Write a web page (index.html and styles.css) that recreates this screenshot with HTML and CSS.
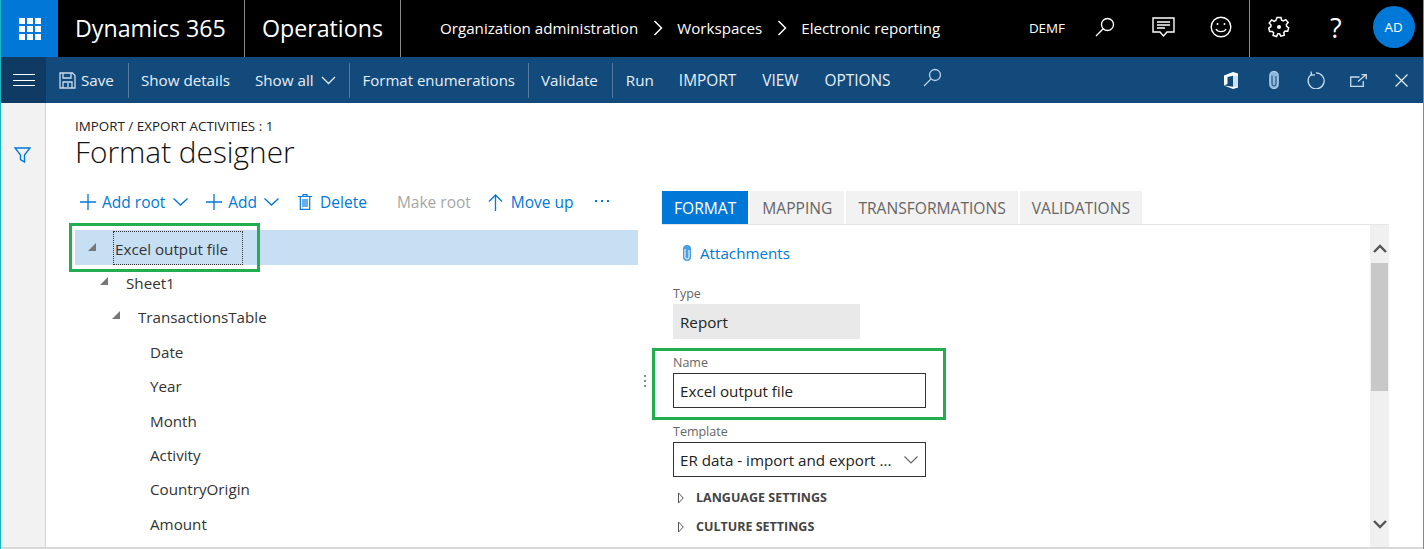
FILE: index.html
```html
<!DOCTYPE html>
<html>
  <head>
    <meta charset="utf-8" />
    <title>Format designer</title>
    <link rel="stylesheet" href="styles.css">
  </head>
  <body>
    <div class="app">
      <header class="topbar">
        <div class="waffle">
          <svg width="22" height="22" viewBox="0 0 22 22" fill="#fff"><rect x="0" y="0" width="6" height="6"/><rect x="8" y="0" width="6" height="6"/><rect x="16" y="0" width="6" height="6"/><rect x="0" y="8" width="6" height="6"/><rect x="8" y="8" width="6" height="6"/><rect x="16" y="8" width="6" height="6"/><rect x="0" y="16" width="6" height="6"/><rect x="8" y="16" width="6" height="6"/><rect x="16" y="16" width="6" height="6"/></svg>
        </div>
        <div class="brand brand-dyn">Dynamics 365</div>
        <div class="brand brand-ops">Operations</div>
        <nav class="crumbs">
          <span>Organization administration</span>
          <svg class="crumb-sep" width="10" height="16" viewBox="0 0 10 16" fill="none" stroke="#fff" stroke-width="1.5"><path d="M1.5 1l7 7-7 7"/></svg>
          <span>Workspaces</span>
          <svg class="crumb-sep" width="10" height="16" viewBox="0 0 10 16" fill="none" stroke="#fff" stroke-width="1.5"><path d="M1.5 1l7 7-7 7"/></svg>
          <span>Electronic reporting</span>
        </nav>
        <div class="top-right">
          <span class="company">DEMF</span>
          <svg class="ti ti-search" width="20" height="20" viewBox="0 0 20 20" fill="none" stroke="#fff" stroke-width="1.3"><circle cx="12.5" cy="7.5" r="6"/><path d="M8.200 11.800L1 19"/></svg>
          <svg class="ti ti-chat" width="23" height="21" viewBox="0 0 23 21" fill="none" stroke="#fff" stroke-width="1.4"><path d="M1 1h21v14h-7l-3.500 4-3.500-4H1z"/><path d="M5 5h13M5 8h13M5 11h8"/></svg>
          <svg class="ti ti-smile" width="22" height="22" viewBox="0 0 22 22" fill="none" stroke="#fff" stroke-width="1.4"><circle cx="11" cy="11" r="9.800"/><path d="M6 13c1.500 3.500 8.500 3.500 10 0"/><circle cx="7.500" cy="8" r="1" fill="#fff" stroke="none"/><circle cx="14.500" cy="8" r="1" fill="#fff" stroke="none"/></svg>
          <div class="top-actions">
            <svg class="ti ti-gear" width="22" height="22" viewBox="0 0 22 22" fill="none" stroke="#fff" stroke-width="1.5"><path d="M9 1.500h4l.6 2.700 1.700.8 2.400-1.400 2.500 3-1.800 2 .2 1.800 2.100 1.400-1 3.400-2.700-.1-1.200 1.400.5 2.700-3.500 1-1.200-2.400h-1.800L8.600 20.500l-3.500-1 .5-2.700-1.200-1.400-2.700.1-1-3.400 2.100-1.400.2-1.800-1.800-2 2.500-3 2.400 1.400 1.700-.8z"/><circle cx="11" cy="11" r="2" fill="#fff" stroke="none"/></svg>
            <span class="help">?</span>
            <span class="avatar">AD</span>
          </div>
        </div>
      </header>

      <div class="cmdbar">
        <button class="menu-btn" aria-label="Menu"><span></span><span></span><span></span></button>
        <div class="cmd-group cmd-save">
          <svg width="17" height="17" viewBox="0 0 17 17" fill="none" stroke="#c7dcef" stroke-width="1.300"><path d="M1 1h12.500L16 3.500V16H1z"/><path d="M4 1v5h8V1M4 16v-6h9v6M9 11v4"/></svg>
          <span>Save</span>
        </div>
        <div class="cmd-group cmd-show">
          <span class="cmd">Show details</span>
          <span class="cmd cmd-all">Show all
            <svg width="15" height="9" viewBox="0 0 15 9" fill="none" stroke="#dfeaf4" stroke-width="1.300"><path d="M1 1l6.500 6.500L14 1"/></svg>
          </span>
        </div>
        <div class="cmd-group cmd-format"><span class="cmd">Format enumerations</span></div>
        <div class="cmd-group cmd-validate"><span class="cmd">Validate</span></div>
        <div class="cmd-group cmd-last">
          <span class="cmd cmd-run">Run</span>
          <span class="cmd cmd-caps cmd-import">IMPORT</span>
          <span class="cmd cmd-caps">VIEW</span>
          <span class="cmd cmd-caps">OPTIONS</span>
          <svg class="cmd-search" width="19" height="19" viewBox="0 0 19 19" fill="none" stroke="#b9d2e8" stroke-width="1.300"><circle cx="12" cy="7" r="5.500"/><path d="M8 11L1 18"/></svg>
        </div>
        <div class="cmd-right">
          <svg class="ci-office" width="14" height="17" viewBox="0 0 14 17"><path fill="#fff" d="M0 3.500L9 0l5 1.500v14L9 17 0 13.500l9 1.200V3.800L3.500 5v7L0 13.500z"/><path fill="#cfe2f3" d="M9 3.800h5v11.700L9 14.700z"/></svg>
          <svg class="ci-clip" width="10" height="18" viewBox="0 0 10 18"><path fill="#8fb6d9" stroke="#c7dcef" stroke-width="1" d="M.8 4.500a4.200 4 0 0 1 8.400 0v9a4.200 4 0 0 1-8.400 0z"/><path fill="none" stroke="#134a7c" stroke-width="1" d="M3 4.500v8.500a2 2 0 0 0 4 0V5"/></svg>
          <svg class="ci-refresh" width="18" height="18" viewBox="0 0 18 18" fill="none" stroke="#c7dcef" stroke-width="1.300"><path d="M4.600 3.200a8 8 0 1 0 4.400-1.400"/><path d="M4 .5l.6 3.600 3.400-.2"/></svg>
          <svg class="ci-pop" width="17" height="13" viewBox="0 0 17 13" fill="none" stroke="#c7dcef" stroke-width="1.300"><path d="M9.500 3H.7v9.300h12.600V7"/><path d="M8 7.500L15.500 1M11.500.7h4.800v4.500"/></svg>
          <svg class="ci-close" width="13" height="13" viewBox="0 0 13 13" fill="none" stroke="#dfeaf4" stroke-width="1.300"><path d="M.5.500l12 12M12.500.500l-12 12"/></svg>
        </div>
      </div>

      <div class="body-row">
        <aside class="rail">
          <svg width="17" height="16" viewBox="0 0 17 16" fill="none" stroke="#0078d7" stroke-width="1.400"><path d="M1 1h15l-5.500 7v7l-4-2.500V8z"/></svg>
        </aside>

        <main class="page">
          <div class="page-head">
            <div class="caption">IMPORT / EXPORT ACTIVITIES : 1</div>
            <h1>Format designer</h1>
          </div>

          <div class="panes">
            <section class="tree-pane">
              <div class="tree-tools">
                <span class="tool tool-root"><svg class="plus" width="16" height="16" viewBox="0 0 16 16" stroke="#0078d7" stroke-width="1.300"><path d="M8 0v16M0 8h16"/></svg>Add root<svg class="chev" width="15" height="8" viewBox="0 0 15 8" fill="none" stroke="#0078d7" stroke-width="1.300"><path d="M.5.500L7.500 7l7-6.500"/></svg></span>
                <span class="tool tool-add"><svg class="plus" width="16" height="16" viewBox="0 0 16 16" stroke="#0078d7" stroke-width="1.300"><path d="M8 0v16M0 8h16"/></svg>Add<svg class="chev" width="15" height="8" viewBox="0 0 15 8" fill="none" stroke="#0078d7" stroke-width="1.300"><path d="M.5.500L7.500 7l7-6.500"/></svg></span>
                <span class="tool tool-del"><svg width="14" height="16" viewBox="0 0 14 16" fill="none" stroke="#0078d7" stroke-width="1.200"><path d="M0 2.500h14M5 2.500V.7h4v1.800M2.300 2.500V15.400h9.400V2.500M5 5v8M7 5v8M9 5v8"/></svg>Delete</span>
                <span class="tool tool-off">Make root</span>
                <span class="tool tool-up"><svg width="15" height="17" viewBox="0 0 15 17" fill="none" stroke="#0078d7" stroke-width="1.300"><path d="M7.500 17V1M1 7.500L7.500 1 14 7.500"/></svg>Move up</span>
                <span class="tool tool-more"><i></i><i></i><i></i></span>
              </div>
              <ul class="tree">
                <li class="node lvl-0 selected"><i class="caret"></i><span class="focus">Excel output file</span><b class="callout callout-tree"></b></li>
                <li class="node lvl-1"><i class="caret"></i><span>Sheet1</span></li>
                <li class="node lvl-2"><i class="caret"></i><span>TransactionsTable</span></li>
                <li class="node lvl-3"><span>Date</span></li>
                <li class="node lvl-3"><span>Year</span></li>
                <li class="node lvl-3"><span>Month</span></li>
                <li class="node lvl-3"><span>Activity</span></li>
                <li class="node lvl-3"><span>CountryOrigin</span></li>
                <li class="node lvl-3"><span>Amount</span></li>
              </ul>
            </section>

            <div class="splitter"><i></i><i></i><i></i></div>

            <section class="detail-pane">
              <div class="tabs">
                <span class="tab active">FORMAT</span>
                <span class="tab">MAPPING</span>
                <span class="tab">TRANSFORMATIONS</span>
                <span class="tab">VALIDATIONS</span>
              </div>
              <div class="tab-body">
                <div class="form">
                  <div class="attach">
                    <svg width="10" height="16" viewBox="0 0 10 16"><path fill="#4a9fe3" d="M1 3.500a4 3.500 0 0 1 8 0V12a4 4 0 0 1-8 0z"/><path fill="none" stroke="#fff" stroke-width="1" d="M3 4v8a2 2 0 0 0 4 0V5"/></svg>
                    <span>Attachments</span>
                  </div>
                  <div class="field field-type">
                    <label>Type</label>
                    <div class="value readonly">Report</div>
                  </div>
                  <div class="field field-name">
                    <label>Name</label>
                    <div class="value boxed">Excel output file</div>
                    <b class="callout callout-name"></b>
                  </div>
                  <div class="field field-tpl">
                    <label>Template</label>
                    <div class="value boxed select">ER data - import and export ...
                      <svg width="14" height="8" viewBox="0 0 14 8" fill="none" stroke="#666" stroke-width="1.200"><path d="M.5.500L7 7 13.500.500"/></svg>
                    </div>
                  </div>
                  <div class="group group-first"><svg width="6" height="12" viewBox="0 0 6 12" fill="none" stroke="#555" stroke-width="1"><path d="M.5 1L5.300 6 .5 11z"/></svg>LANGUAGE SETTINGS</div>
                  <div class="group"><svg width="6" height="12" viewBox="0 0 6 12" fill="none" stroke="#555" stroke-width="1"><path d="M.5 1L5.300 6 .5 11z"/></svg>CULTURE SETTINGS</div>
                </div>
                <div class="scrollbar">
                  <svg width="14" height="9" viewBox="0 0 14 9" fill="none" stroke="#555" stroke-width="2.400"><path d="M1 8l6-6 6 6"/></svg>
                  <div class="thumb"></div>
                  <svg class="sb-down" width="14" height="9" viewBox="0 0 14 9" fill="none" stroke="#555" stroke-width="2.400"><path d="M1 1l6 6 6-6"/></svg>
                </div>
              </div>
            </section>
          </div>
        </main>
      </div>
    </div>
  </body>
</html>
```

FILE: styles.css
```css
* {
  box-sizing: border-box;
  margin: 0;
  padding: 0;
}

html,
body {
  height: 100%;
  overflow: hidden;
  background: #fff;
}

body {
  font-family: "Open Sans", "Noto Sans", sans-serif;
  font-size: 15.2px;
  color: #333;
}

.app {
  height: 549px;
  border-left: 1px solid #1bb6c4;
  border-right: 1px solid #1bb6c4;
  display: flex;
  flex-direction: column;
}

/* top black bar */
.topbar {
  height: 57px;
  background: #000;
  color: #fff;
  display: flex;
  align-items: stretch;
  flex: none;
}

.waffle {
  width: 57px;
  background: #0078d7;
  display: flex;
  align-items: center;
  justify-content: center;
}

.brand {
  display: flex;
  align-items: center;
  font-size: 23.2px;
  border-right: 1px solid #8a8a8a;
  padding-bottom: 1px;
}

.brand-dyn {
  width: 187px;
  padding-left: 17px;
}

.brand-ops {
  width: 156px;
  padding-left: 17px;
}

.crumbs {
  display: flex;
  align-items: center;
  margin-left: 39px;
  padding-bottom: 2px;
  font-size: 15.15px;
}

.crumb-sep {
  margin: 0 14.5px;
}

.top-right {
  margin-left: auto;
  display: flex;
  align-items: center;
}

.company {
  font-size: 13.4px;
  margin-right: 30px;
  padding-bottom: 2px;
}

.ti {
  display: block;
  margin-bottom: 3px;
}

.ti-search {
  margin-right: 37px;
}

.ti-chat {
  margin-right: 35px;
}

.ti-smile {
  margin-right: 17px;
}

.top-actions {
  height: 57px;
  width: 174px;
  border-left: 1px solid #8a8a8a;
  display: flex;
  align-items: center;
  padding-left: 18px;
}

.help {
  font-size: 27px;
  margin-left: 40px;
  margin-bottom: 3px;
}

.avatar {
  width: 42px;
  height: 42px;
  border-radius: 50%;
  background: #0078d7;
  font-size: 13.4px;
  display: flex;
  align-items: center;
  justify-content: center;
  margin-left: 31px;
  margin-bottom: 3px;
}

/* command bar */
.cmdbar {
  height: 46px;
  flex: none;
  background: #134a7c;
  color: #e6eff7;
  display: flex;
  align-items: center;
}

.menu-btn {
  width: 45px;
  height: 46px;
  background: #0f3a63;
  border: 0;
  display: flex;
  flex-direction: column;
  align-items: center;
  justify-content: center;
  gap: 4.5px;
}

.menu-btn span {
  display: block;
  width: 22px;
  height: 1px;
  background: #fff;
}

.cmd-group {
  height: 35px;
  display: flex;
  align-items: center;
  border-right: 1px solid #54799e;
  padding: 0 13px 0 12px;
  gap: 25px;
  white-space: nowrap;
}

.cmd-save {
  padding: 0 14px 0 13px;
  gap: 5px;
}

.cmd-show {
  padding-right: 13px;
}

.cmd-all svg {
  margin-left: 3px;
  vertical-align: 1px;
}

.cmd-format {
  padding: 0 13px;
  font-size: 15px;
}

.cmd-validate {
  padding-right: 14px;
}

.cmd-last {
  border-right: 0;
  padding-left: 13px;
  gap: 26px;
}

.cmd-caps {
  font-size: 15.4px;
}

.cmd-import {
  margin-left: -1px;
}

.cmd-search {
  margin-top: -5px;
  margin-left: 7px;
}

.cmd-right {
  margin-left: auto;
  display: flex;
  align-items: center;
  padding-right: 15px;
}

.ci-clip {
  margin-left: 31px;
}

.ci-refresh {
  margin-left: 28px;
}

.ci-pop {
  margin-left: 25px;
}

.ci-close {
  margin-left: 28px;
}

/* page body */
.body-row {
  flex: 1;
  min-height: 0;
  display: flex;
  border-bottom: 2px solid #d8d8d8;
}

.rail {
  width: 45px;
  flex: none;
  background: #f2f2f2;
  border-right: 1px solid #d4d4d4;
  padding: 44px 0 0 13px;
}

.page {
  flex: 1;
  min-width: 0;
  padding-top: 15px;
  overflow: hidden;
}

.page-head {
  padding-left: 29px;
}

.caption {
  font-size: 13.4px;
  line-height: 16px;
  color: #222;
}

h1 {
  font-size: 29.8px;
  font-weight: 300;
  line-height: 35px;
  color: #111;
}

.panes {
  display: flex;
  margin-top: 22px;
}

.tree-pane {
  width: 592px;
  flex: none;
  padding-left: 29px;
}

.tree-tools {
  height: 22px;
  margin-bottom: 17px;
  display: flex;
  align-items: center;
  color: #0078d7;
  padding-left: 5px;
  white-space: nowrap;
  font-size: 15.5px;
}

.tool {
  display: flex;
  align-items: center;
}

.plus {
  margin-right: 6px;
}

.chev {
  margin-left: 7px;
}

.tool-root .chev {
  margin-left: 8px;
}

.tool-add {
  margin-left: 18px;
}

.tool-del {
  margin-left: 19px;
}

.tool-del svg {
  margin-right: 8px;
}

.tool-off {
  margin-left: 30px;
  color: #a6a6a6;
}

.tool-up {
  margin-left: 17px;
}

.tool-up svg {
  margin-right: 8px;
}

.tool-more {
  margin-left: 21px;
  gap: 4px;
  padding-bottom: 2px;
}

.tool-more i {
  width: 2px;
  height: 2px;
  background: #0078d7;
}

.tree {
  list-style: none;
}

.node {
  height: 34.400px;
  padding-top: 3px;
  display: flex;
  align-items: center;
  position: relative;
  color: #333;
}

.selected {
  background: #c7dff3;
  height: 35px;
  margin-bottom: -0.600px;
}

.caret {
  width: 0;
  height: 0;
  border-style: solid;
  border-width: 0 0 8px 8px;
  border-color: transparent transparent #777 transparent;
  flex: none;
  margin-right: 18px;
  margin-top: -4px;
}

.lvl-0 {
  padding-left: 13px;
}

.lvl-1 {
  padding-left: 25px;
}

.lvl-2 {
  padding-left: 37px;
}

.lvl-3 {
  padding-left: 75px;
}

.focus {
  outline: 1px dotted #333;
  padding: 5px 0 5px 1px;
  width: 128px;
  white-space: nowrap;
  margin-top: -3px;
  height: 32px;
  line-height: 25px;
}

/* green highlight boxes sit over the content */
.callout {
  position: absolute;
  border: 3px solid #21ad50;
  pointer-events: none;
}

.callout-tree {
  left: -6px;
  top: -7px;
  width: 191px;
  height: 49px;
}

.callout-name {
  left: -21px;
  top: -6px;
  width: 294px;
  height: 72px;
}

.splitter {
  width: 24px;
  flex: none;
  display: flex;
  flex-direction: column;
  align-items: flex-start;
  gap: 3px;
  padding: 184px 0 0 6px;
}

.splitter i {
  width: 2px;
  height: 2px;
  background: #888;
}

.detail-pane {
  flex: 1;
  min-width: 0;
}

.tabs {
  display: flex;
  gap: 2px;
  height: 33px;
}

.tab {
  background: #f2f2f2;
  color: #666;
  padding: 1px 12px 0;
  display: flex;
  align-items: center;
  white-space: nowrap;
  font-size: 15.6px;
}

.tab.active {
  background: #0078d7;
  color: #fff;
}

.tab-body {
  border-top: 1px solid #e6e6e6;
  margin-right: 34px;
  display: flex;
  justify-content: space-between;
  height: 325px;
}

.form {
  padding: 17px 0 0 11px;
  width: 284px;
}

.attach {
  display: flex;
  align-items: center;
  gap: 8px;
  padding-left: 9px;
  color: #0078d7;
  height: 22px;
  margin-bottom: 21px;
}

.field {
  position: relative;
  margin-bottom: 15px;
}

.field label {
  display: block;
  font-size: 12.500px;
  line-height: 18px;
  margin-bottom: 1px;
  color: #666;
}

.value {
  height: 35px;
  line-height: 34px;
  padding: 0 6px;
  color: #222;
  border: 1px solid transparent;
  white-space: nowrap;
}

.readonly {
  background: #e9e9e9;
  width: 187px;
}

.boxed {
  width: 253px;
  border: 1px solid #333;
}

.select {
  display: flex;
  align-items: center;
  justify-content: space-between;
  padding-right: 7px;
}

.group {
  font-size: 12.500px;
  font-weight: 700;
  color: #444;
  display: flex;
  align-items: center;
  gap: 12px;
  height: 29px;
  padding-left: 5px;
}

.group-first {
  margin-top: -9px;
}

.scrollbar {
  width: 19px;
  background: #f0f0f0;
  display: flex;
  flex-direction: column;
  align-items: center;
  padding-top: 19px;
}

.thumb {
  width: 17px;
  height: 128px;
  background: #c8c8c8;
  margin-top: 10px;
}

.sb-down {
  margin-top: auto;
  margin-bottom: 20px;
}
```
